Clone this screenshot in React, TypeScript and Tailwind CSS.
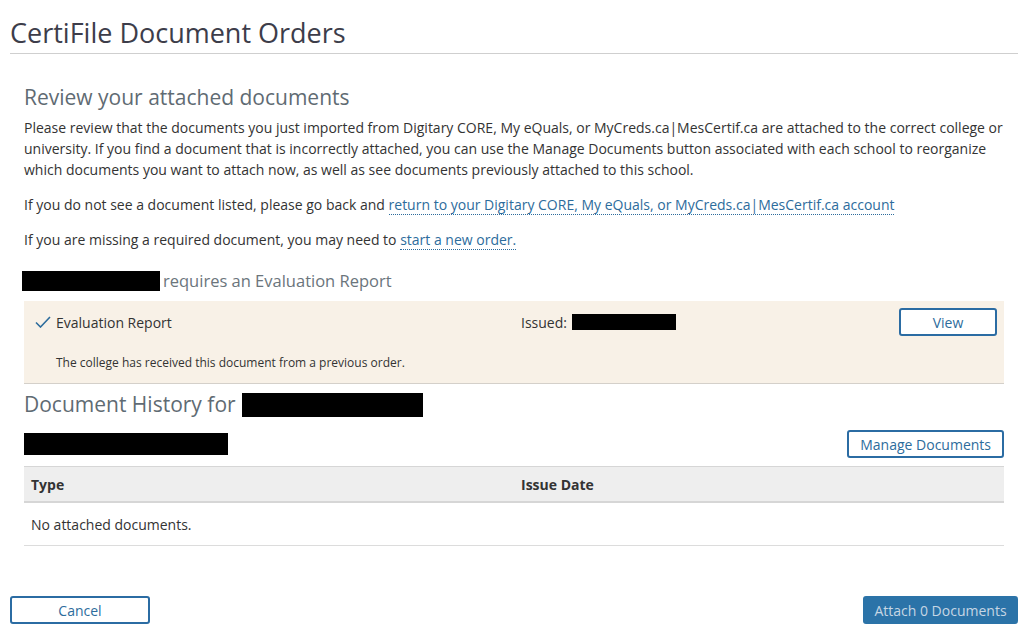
import React from 'react'

const font = { fontFamily: '"Open Sans", "Noto Sans", sans-serif' }

function Redacted({ className }: { className: string }) {
  return <span className={`inline-block bg-black align-middle ${className}`} />
}

export default function App() {
  return (
    <div className="bg-white w-[1026px] h-[631px] overflow-hidden text-[#333] text-[14px]" style={font}>
      {/* header */}
      <div className="ml-[10px] mr-[8px] pt-[17px] pb-[4px] border-b border-[#cfcfcf]">
        <h1 className="text-[27px] leading-[32px] font-normal text-[#3d3d4a]">CertiFile Document Orders</h1>
      </div>

      <div className="ml-[24px] mr-[22px] mt-[29px]">
        <h2 className="text-[21px] leading-[28px] text-[#5f6b73]">Review your attached documents</h2>
        <p className="mt-[6px] leading-[21px] -mr-[6px]">
          Please review that the documents you just imported from Digitary CORE, My eQuals, or MyCreds.ca|MesCertif.ca are attached to the correct college or university. If you find a document that is incorrectly attached, you can use the Manage Documents button associated with each school to reorganize which documents you want to attach now, as well as see documents previously attached to this school.
        </p>
        <p className="mt-[14px] leading-[21px]">
          If you do not see a document listed, please go back and{' '}
          <a className="text-[#2d6c9c] border-b border-dotted border-[#2d6c9c]">return to your Digitary CORE, My eQuals, or MyCreds.ca|MesCertif.ca account</a>
        </p>
        <p className="mt-[14px] leading-[21px]">
          If you are missing a required document, you may need to{' '}
          <a className="text-[#2d6c9c] border-b border-dotted border-[#2d6c9c]">start a new order.</a>
        </p>

        <div className="mt-[20px] flex items-center -ml-[2px] h-[22px]">
          <Redacted className="w-[138px] h-[20px]" />
          <span className="ml-[3px] text-[16.5px] text-[#6b757c]">requires an Evaluation Report</span>
        </div>

        <div className="mt-[9px] bg-[#f8f1e7] border-b border-[#d4d0ca] h-[83px] px-[11px] pt-[7px]">
          <div className="flex items-center h-[28px]">
            <div className="w-[486px] flex items-center">
              <svg width="16" height="12" viewBox="0 0 16 12" className="mr-[5px]">
                <path d="M1 6.5 L5.5 11 L15 1" fill="none" stroke="#2d6c9c" strokeWidth="1.6" />
              </svg>
              <span>Evaluation Report</span>
            </div>
            <div className="flex items-center flex-1">
              <span>Issued:</span>
              <Redacted className="ml-[5px] w-[104px] h-[16px]" />
            </div>
            <button className="w-[98px] h-[28px] border-2 border-[#2b6ca3] rounded-[3px] text-[#2d6c9c] bg-white -mr-[4px]">View</button>
          </div>
          <p className="mt-[18px] ml-[21px] text-[12px]">The college has received this document from a previous order.</p>
        </div>

        <div className="mt-[8px] flex items-center h-[26px]">
          <h2 className="text-[21px] text-[#5f6b73]">Document History for</h2>
          <Redacted className="ml-[6px] w-[181px] h-[24px]" />
        </div>

        <div className="mt-[12px] flex items-center justify-between">
          <Redacted className="w-[204px] h-[22px]" />
          <button className="h-[28px] px-[11px] border-2 border-[#2b6ca3] rounded-[3px] text-[#2d6c9c] bg-white">Manage Documents</button>
        </div>

        <div className="mt-[8px] border-t border-[#d6d6d6]">
          <div className="flex bg-[#eeeeee] border-b-2 border-[#d6d6d6] h-[36px] items-center px-[7px] font-bold">
            <div className="w-[490px]">Type</div>
            <div>Issue Date</div>
          </div>
          <div className="h-[43px] flex items-center px-[7px] border-b border-[#dcdcdc]">No attached documents.</div>
        </div>
      </div>

      <div className="ml-[10px] mr-[8px] mt-[50px] flex justify-between">
        <button className="w-[140px] h-[28px] border-2 border-[#2b6ca3] rounded-[3px] text-[#2d6c9c] bg-white">Cancel</button>
        <button className="w-[155px] h-[28px] rounded-[3px] bg-[#2b73a8] text-[#c6d6e4]">Attach 0 Documents</button>
      </div>
    </div>
  )
}
